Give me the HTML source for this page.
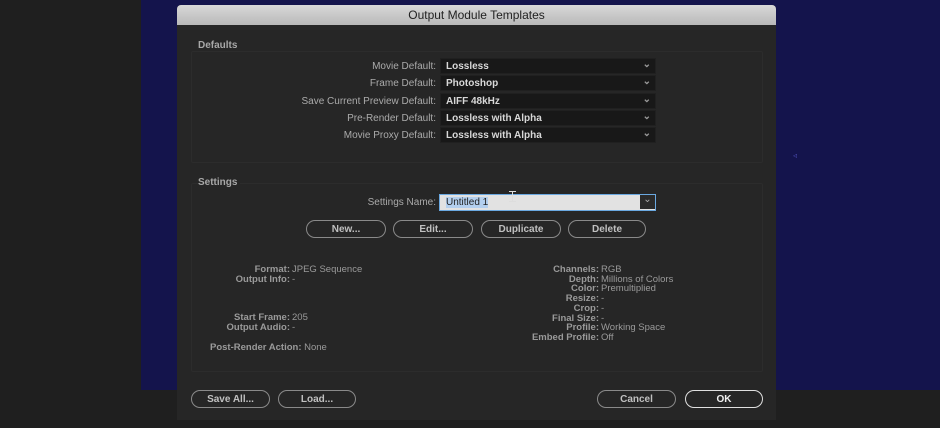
<!DOCTYPE html>
<html><head><meta charset="utf-8"><style>
*{margin:0;padding:0;box-sizing:border-box}
body{width:940px;height:428px;overflow:hidden;background:#1f1f1f;position:relative;font-family:"Liberation Sans",sans-serif;font-size:10px;color:#b8b8b8}
.a{position:absolute}
#navy{left:141px;top:0;width:799px;height:390px;background:#14144c}
#dlg{left:177px;top:5px;width:599px;height:415px;background:#262626;border-radius:4px 4px 0 0;overflow:hidden}
#tb{left:0;top:0;width:599px;height:20px;background:linear-gradient(#d8d8d8,#b9b9b9);color:#222;font-size:12px;text-align:center;line-height:21px}
.box{border:1px solid #2c2c2c;border-radius:2px}
.lbl{font-weight:bold;color:#a8a8a8}
.row{left:0;width:259px;text-align:right;color:#ababab;font-size:10px;line-height:18px}
.dd{left:263px;width:216px;height:16px;background:#181818;border:1px solid #202020;color:#d8d8d8;font-weight:bold;padding-left:5px;line-height:16px}
.dd:after{content:"⌄";position:absolute;right:4px;top:-2px;color:#999;font-size:10px}
.btn{height:18px;border:1.5px solid #8a8a8a;border-radius:9px;text-align:center;line-height:17px;color:#c0c0c0;font-weight:bold;font-size:10px}
.inf{font-weight:bold;color:#9a9a9a;font-size:9.5px;line-height:10px;white-space:nowrap}
.inf span{font-weight:normal}
</style></head><body>
<div id="navy" class="a"></div>
<div class="a" style="left:793px;top:151px;color:#4a4ab0;font-size:8px">◃</div>
<div id="dlg" class="a">
<div id="tb" class="a">Output Module Templates</div>
<div class="a box" style="left:14px;top:46px;width:572px;height:112px"></div>
<div class="a lbl" style="left:21px;top:35px;background:#262626;padding-right:3px">Defaults</div>
<div class="a row" style="top:53px">Movie Default:</div><div class="a dd" style="top:53px">Lossless</div>
<div class="a row" style="top:70px">Frame Default:</div><div class="a dd" style="top:70px">Photoshop</div>
<div class="a row" style="top:88px">Save Current Preview Default:</div><div class="a dd" style="top:88px">AIFF 48kHz</div>
<div class="a row" style="top:105px">Pre-Render Default:</div><div class="a dd" style="top:105px">Lossless with Alpha</div>
<div class="a row" style="top:122px">Movie Proxy Default:</div><div class="a dd" style="top:122px">Lossless with Alpha</div>
<div class="a box" style="left:14px;top:178px;width:572px;height:189px"></div>
<div class="a lbl" style="left:21px;top:172px;background:#262626;padding-right:3px">Settings</div>
<div class="a row" style="top:189px">Settings Name:</div>
<div class="a" style="left:262px;top:189px;width:217px;height:17px;background:#e2e2e2;border:1.5px solid #6aa8e0;color:#222;line-height:15px;padding-left:6px"><span style="background:#b3cfee">Untitled 1</span>
<div class="a" style="right:0;top:0;width:15px;height:14px;background:#2a2a2a;color:#aaa;text-align:center;line-height:10px">⌄</div></div>
<div class="a" style="left:331px;top:186px;width:7px;height:12px;border-left:1px solid transparent">
<div class="a" style="left:3px;top:0;width:1px;height:11px;background:#ddd"></div>
<div class="a" style="left:0;top:0;width:7px;height:1px;background:#ddd"></div>
<div class="a" style="left:0;top:10px;width:7px;height:1px;background:#ddd"></div></div>
<div class="a btn" style="left:129px;top:215px;width:80px">New...</div>
<div class="a btn" style="left:216px;top:215px;width:80px">Edit...</div>
<div class="a btn" style="left:304px;top:215px;width:80px">Duplicate</div>
<div class="a btn" style="left:391px;top:215px;width:78px">Delete</div>
<div class="a inf" style="left:0;width:113px;text-align:right;top:260px">Format:</div><div class="a inf" style="left:115px;top:260px"><span>JPEG Sequence</span></div>
<div class="a inf" style="left:0;width:113px;text-align:right;top:270px">Output Info:</div><div class="a inf" style="left:115px;top:270px"><span>-</span></div>
<div class="a inf" style="left:0;width:113px;text-align:right;top:308px">Start Frame:</div><div class="a inf" style="left:115px;top:308px"><span>205</span></div>
<div class="a inf" style="left:0;width:113px;text-align:right;top:318px">Output Audio:</div><div class="a inf" style="left:115px;top:318px"><span>-</span></div>
<div class="a inf" style="left:33px;top:338px">Post-Render Action: <span>None</span></div>
<div class="a inf" style="left:300px;width:122px;text-align:right;top:260px;line-height:9.7px">Channels:<br>Depth:<br>Color:<br>Resize:<br>Crop:<br>Final Size:<br>Profile:<br>Embed Profile:</div>
<div class="a inf" style="left:424px;top:260px;line-height:9.7px"><span>RGB<br>Millions of Colors<br>Premultiplied<br>-<br>-<br>-<br>Working Space<br>Off</span></div>
<div class="a btn" style="left:14px;top:385px;width:79px">Save All...</div>
<div class="a btn" style="left:101px;top:385px;width:78px">Load...</div>
<div class="a btn" style="left:420px;top:385px;width:79px">Cancel</div>
<div class="a btn" style="left:508px;top:385px;width:78px;border-color:#e0e0e0;color:#f0f0f0">OK</div>
</div>
</body></html>
